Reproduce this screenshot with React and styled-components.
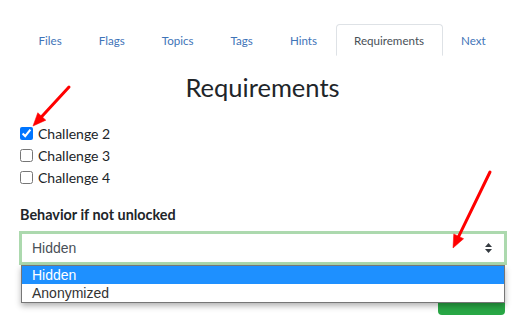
import React from "react";
import styled, { createGlobalStyle } from "styled-components";

const GlobalStyle = createGlobalStyle`
    body {
        margin: 0;
        background: #fff;
        font-family: Lato, "Open Sans", sans-serif;
        color: #212529;
    }
`;

const Page = styled.div`
    position: relative;
    width: 527px;
    height: 331px;
    padding: 24px 22px 0 20px;
    box-sizing: border-box;
    overflow: hidden;
`;

const Tabs = styled.div`
    display: flex;
    border-bottom: 1px solid #dee2e6;
    margin-right: 3px;
`;

const Tab = styled.div`
    display: flex;
    align-items: center;
    height: 32px;
    padding: 1px 17.5px 0;
    margin-bottom: -1px;
    border: 1px solid ${p => (p.$active ? "#dee2e6" : "transparent")};
    border-bottom-color: ${p => (p.$active ? "#fff" : "transparent")};
    border-radius: 4px 4px 0 0;
    background: #fff;
    font-size: 11.6px;
    color: ${p => (p.$active ? "#495057" : "#3f74b8")};
    box-sizing: border-box;
`;

const Title = styled.h2`
    margin: 16px 0 0;
    text-align: center;
    font-weight: 400;
    font-size: 25.5px;
    line-height: 1.2;
    color: #212529;
`;

const Checks = styled.div`
    margin-top: 20px;
    display: flex;
    flex-direction: column;
`;

const CheckRow = styled.label`
    display: flex;
    align-items: center;
    gap: 5px;
    height: 22px;
    font-size: 14px;
    color: #212529;
    input {
        width: 13px;
        height: 13px;
        margin: 0;
    }
`;

const FieldLabel = styled.div`
    margin-top: 16px;
    font-size: 14.4px;
    line-height: 20px;
    font-weight: 700;
    color: #212529;
`;

const SelectWrap = styled.div`
    position: relative;
    margin: 6px -2px 0 -1px;
`;

const SelectBox = styled.div`
    display: flex;
    align-items: center;
    justify-content: space-between;
    height: 34px;
    padding: 0 12px 0 10px;
    border: 3px solid #acd9ae;
    box-sizing: border-box;
    font-family: "Liberation Sans", Arial, sans-serif;
    font-size: 14px;
    color: #495057;
    background: #fff;
`;

const DropList = styled.div`
    position: absolute;
    top: 100%;
    left: 2px;
    right: 2px;
    border: 1px solid #767676;
    background: #fff;
    box-shadow: 0 3px 6px rgba(0, 0, 0, 0.3);
    z-index: 2;
`;

const Option = styled.div`
    height: 18px;
    line-height: 18px;
    padding-left: 10px;
    font-family: "Liberation Sans", Arial, sans-serif;
    font-size: 14px;
    background: ${p => (p.$selected ? "#1e90ff" : "#fff")};
    color: ${p => (p.$selected ? "#fff" : "#333")};
`;

const Actions = styled.div`
    display: flex;
    justify-content: flex-end;
    margin-top: 16px;
`;

const SubmitBtn = styled.button`
    width: 67px;
    height: 34px;
    padding: 0 0 12px;
    border: none;
    border-radius: 4px;
    background: #28a745;
    color: #fff;
    font-family: Lato, sans-serif;
    font-size: 14px;
`;

const Overlay = styled.svg`
    position: absolute;
    left: 0;
    top: 0;
    pointer-events: none;
    z-index: 5;
`;

function Arrow({ x1, y1, x2, y2 }) {
    const dx = x2 - x1;
    const dy = y2 - y1;
    const len = Math.hypot(dx, dy);
    const ux = dx / len;
    const uy = dy / len;
    const bx = x2 - ux * 13;
    const by = y2 - uy * 13;
    const nx = -uy * 5.5;
    const ny = ux * 5.5;
    return (
        <g fill="#f00" stroke="#f00">
            <line x1={x1} y1={y1} x2={bx} y2={by} strokeWidth="3" strokeLinecap="round" />
            <polygon points={`${x2},${y2} ${bx + nx},${by + ny} ${bx - nx},${by - ny}`} strokeWidth="0.5" />
        </g>
    );
}

const tabs = ["Files", "Flags", "Topics", "Tags", "Hints", "Requirements", "Next"];
const challenges = [
    { name: "Challenge 2", checked: true },
    { name: "Challenge 3", checked: false },
    { name: "Challenge 4", checked: false },
];

export default function App() {
    return (
        <Page>
            <GlobalStyle />
            <Tabs>
                {tabs.map(t => (
                    <Tab key={t} $active={t === "Requirements"}>{t}</Tab>
                ))}
            </Tabs>
            <Title>Requirements</Title>
            <Checks>
                {challenges.map(c => (
                    <CheckRow key={c.name}>
                        <input type="checkbox" defaultChecked={c.checked} />
                        {c.name}
                    </CheckRow>
                ))}
            </Checks>
            <FieldLabel>Behavior if not unlocked</FieldLabel>
            <SelectWrap>
                <SelectBox>
                    <span>Hidden</span>
                    <svg width="7" height="10" viewBox="0 0 7 10">
                        <path d="M3.5 0 L7 4 H0 Z M0 6 H7 L3.5 10 Z" fill="#343a40" />
                    </svg>
                </SelectBox>
                <DropList>
                    <Option $selected>Hidden</Option>
                    <Option>Anonymized</Option>
                </DropList>
            </SelectWrap>
            <Actions>
                <SubmitBtn>Update</SubmitBtn>
            </Actions>
            <Overlay width="527" height="331">
                <Arrow x1={69} y1={87} x2={33} y2={126} />
                <Arrow x1={490} y1={172} x2={453} y2={248} />
            </Overlay>
        </Page>
    );
}
